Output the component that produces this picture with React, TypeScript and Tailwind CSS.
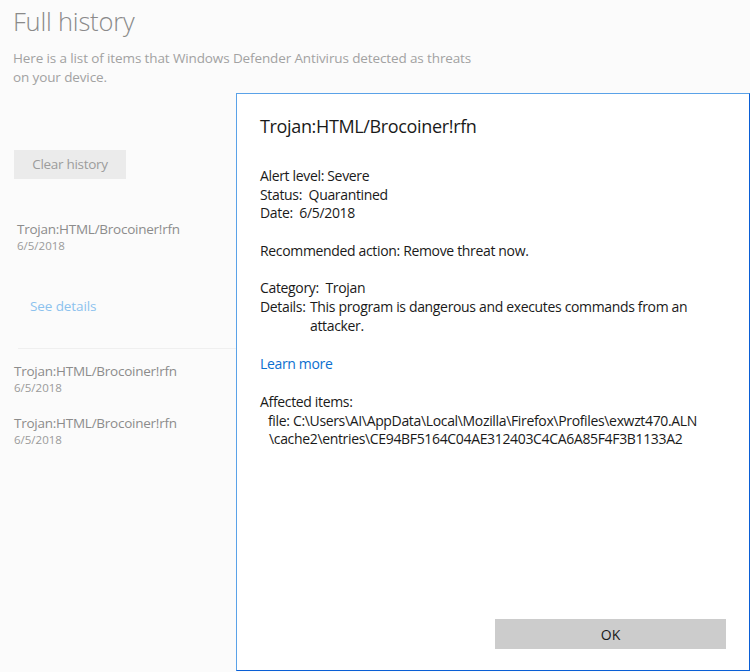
import React from "react";

export default function App() {
  const font = { fontFamily: '"Open Sans", "Noto Sans", sans-serif' };
  return (
    <div className="relative w-[750px] h-[672px] overflow-hidden bg-[#fbfbfb]" style={font}>
      {/* Background page */}
      <div className="flex flex-col pl-[13px] pt-[3px]">
        <h1 className="text-[25.5px] leading-[36px] font-light text-[#8a8a8a] tracking-[-0.2px]">Full history</h1>
        <p className="mt-[10px] w-[476px] text-[13.5px] leading-[19px] text-[#a2a2a2] tracking-[-0.12px]">
          Here is a list of items that Windows Defender Antivirus detected as threats on your device.
        </p>
        <button className="mt-[63px] ml-[1px] w-[112px] h-[29px] bg-[#ebebeb] text-[13.5px] text-[#9c9c9c] tracking-[-0.3px]">
          Clear history
        </button>
        <div className="mt-[41px] pl-[4px] flex flex-col">
          <span className="text-[13.5px] leading-[18px] text-[#8c8c8c] tracking-[-0.25px]">Trojan:HTML/Brocoiner!rfn</span>
          <span className="text-[11.5px] leading-[16px] text-[#9a9a9a]">6/5/2018</span>
          <span className="mt-[42px] ml-[13px] text-[13.5px] leading-[20px] text-[#8cc2ee] tracking-[-0.1px]">See details</span>
        </div>
        <div className="mt-[32px] ml-[5px] w-[218px] h-px bg-[#efefef]" />
        <div className="mt-[13px] pl-[1px] flex flex-col">
          <span className="text-[13.5px] leading-[18px] text-[#8c8c8c] tracking-[-0.25px]">Trojan:HTML/Brocoiner!rfn</span>
          <span className="text-[11.5px] leading-[16px] text-[#9a9a9a]">6/5/2018</span>
          <span className="mt-[18px] text-[13.5px] leading-[18px] text-[#8c8c8c] tracking-[-0.25px]">Trojan:HTML/Brocoiner!rfn</span>
          <span className="text-[11.5px] leading-[16px] text-[#9a9a9a]">6/5/2018</span>
        </div>
      </div>

      {/* Dialog */}
      <div className="absolute left-[236px] top-[93px] w-[514px] h-[578px] bg-white border border-l-[#5aa2e8] border-t-[#5aa2e8] border-r-[#0a5fd6] border-b-[#0a5fd6] flex flex-col">
        <div className="flex flex-col pl-[23px] pt-[19px] text-[#1a1a1a] text-[14px] leading-[18.6px] tracking-[-0.34px]">
          <div className="text-[18px] leading-[26px] tracking-[-0.35px]">Trojan:HTML/Brocoiner!rfn</div>
          <div className="mt-[28px]">Alert level: Severe</div>
          <div>Status:&nbsp; Quarantined</div>
          <div>Date:&nbsp; 6/5/2018</div>
          <div className="mt-[19.5px]">Recommended action: Remove threat now.</div>
          <div className="mt-[18.5px]">Category:&nbsp; Trojan</div>
          <div className="flex mt-[0.5px]">
            <span className="w-[50px] shrink-0">Details:</span>
            <span className="w-[400px]">This program is dangerous and executes commands from an attacker.</span>
          </div>
          <div className="mt-[19px] text-[#0b6fcf]">Learn more</div>
          <div className="mt-[20px]">Affected items:</div>
          <div className="pl-[8px] whitespace-nowrap">file: C:\Users\AI\AppData\Local\Mozilla\Firefox\Profiles\exwzt470.ALN</div>
          <div className="pl-[9px] whitespace-nowrap">\cache2\entries\CE94BF5164C04AE312403C4CA6A85F4F3B1133A2</div>
        </div>
        <div className="mt-auto mb-[21px] flex justify-end pr-[23px]">
          <button className="w-[231px] h-[30px] bg-[#cccccc] text-[14px] text-[#1a1a1a]">OK</button>
        </div>
      </div>
    </div>
  );
}
